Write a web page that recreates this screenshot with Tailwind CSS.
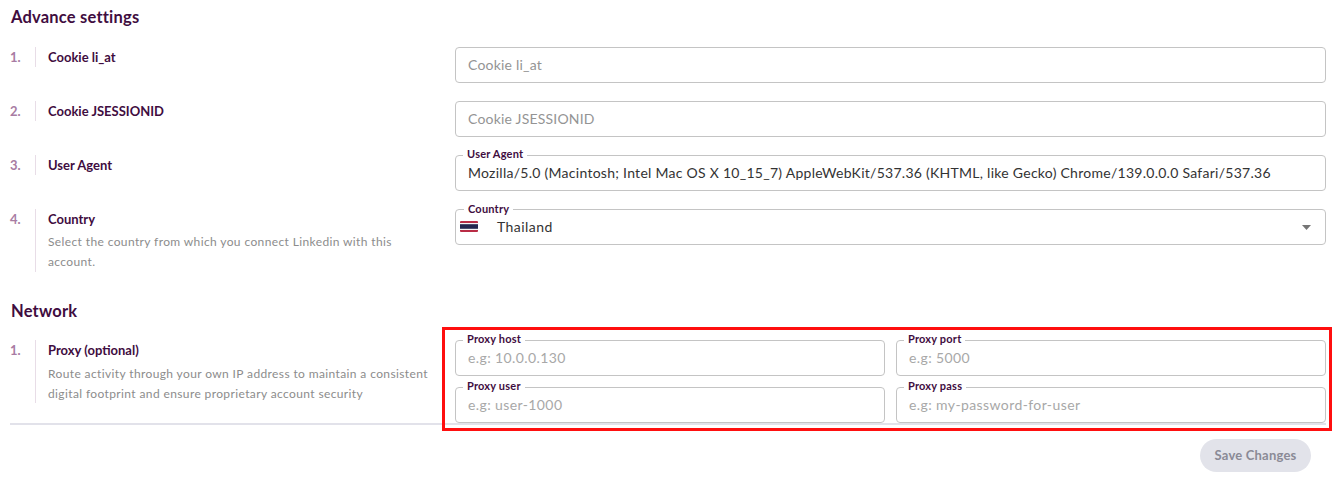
<!DOCTYPE html>
<html lang="en">
<head>
    <meta charset="UTF-8">
    <meta name="viewport" content="width=device-width, initial-scale=1.0">
    <title>Account settings</title>
    <script src="https://cdn.jsdelivr.net/npm/@tailwindcss/browser@4"></script>
</head>
<body class="bg-white font-['Lato','Noto_Sans',sans-serif] text-[#3f0d3f]">
<div class="relative w-[1336px] h-[485px] overflow-hidden pt-[5px] pl-[10px] pr-[10px]">

    <!-- Advance settings -->
    <h2 class="pl-px text-[16.5px] leading-6 font-bold tracking-[0.2px] mb-[18px]">Advance settings</h2>
    <div class="flex flex-col gap-[18px]">
        <div class="flex">
            <div class="w-[445px] flex">
                <span class="w-[26px] border-r border-[#e8dde7] h-5 text-[13px] leading-5 font-bold text-[#a87ca3]">1.</span>
                <span class="pl-3 text-[13px] leading-5 font-bold">Cookie li_at</span>
            </div>
            <input class="flex-1 h-9 px-3 pb-[2px] border border-[#c4c4c4] rounded text-[14px] tracking-[0.2px] text-[#333] placeholder:text-[#949494] outline-none" placeholder="Cookie li_at">
        </div>
        <div class="flex">
            <div class="w-[445px] flex">
                <span class="w-[26px] border-r border-[#e8dde7] h-5 text-[13px] leading-5 font-bold text-[#a87ca3]">2.</span>
                <span class="pl-3 text-[13px] leading-5 font-bold">Cookie JSESSIONID</span>
            </div>
            <input class="flex-1 h-9 px-3 pb-[2px] border border-[#c4c4c4] rounded text-[14px] tracking-[0.2px] text-[#333] placeholder:text-[#949494] outline-none" placeholder="Cookie JSESSIONID">
        </div>
        <div class="flex">
            <div class="w-[445px] flex">
                <span class="w-[26px] border-r border-[#e8dde7] h-5 text-[13px] leading-5 font-bold text-[#a87ca3]">3.</span>
                <span class="pl-3 text-[13px] leading-5 font-bold">User Agent</span>
            </div>
            <div class="relative flex-1">
                <label class="absolute -top-[8px] left-[8px] px-1 bg-white text-[11px] leading-[13px] font-bold tracking-[0.2px]">User Agent</label>
                <input class="w-full h-9 px-3 pb-[2px] border border-[#c4c4c4] rounded text-[14px] tracking-[0.27px] text-[#333] outline-none" value="Mozilla/5.0 (Macintosh; Intel Mac OS X 10_15_7) AppleWebKit/537.36 (KHTML, like Gecko) Chrome/139.0.0.0 Safari/537.36">
            </div>
        </div>
        <div class="flex">
            <div class="w-[445px] flex">
                <span class="w-[26px] border-r border-[#e8dde7] h-[63px] text-[13px] leading-5 font-bold text-[#a87ca3]">4.</span>
                <div class="pl-3 w-[397px]">
                    <p class="text-[13px] leading-5 font-bold">Country</p>
                    <p class="mt-[3px] text-[12px] leading-5 tracking-[0.38px] text-[#8c8c8c]">Select the country from which you connect Linkedin with this account.</p>
                </div>
            </div>
            <div class="relative flex-1 h-9 flex items-center border border-[#c4c4c4] rounded pl-1 pr-[14px]">
                <label class="absolute -top-[8px] left-[8px] px-1 bg-white text-[11px] leading-[13px] font-bold tracking-[0.2px]">Country</label>
                <svg class="w-[18px] h-[11px] mb-px" viewBox="0 0 18 11">
                    <rect width="18" height="11" rx="1" fill="#b92c45"/>
                    <rect y="2" width="18" height="7" fill="#f4f4f4"/>
                    <rect y="3.2" width="18" height="4.6" fill="#23264f"/>
                </svg>
                <span class="ml-[19px] pb-[2px] text-[14px] tracking-[0.45px] text-[#333]">Thailand</span>
                <svg class="ml-auto w-[9px] h-[5px]" viewBox="0 0 9 5"><polygon points="0,0 9,0 4.5,5" fill="#757575"/></svg>
            </div>
        </div>
    </div>

    <!-- Network -->
    <h2 class="mt-[27px] pl-px text-[16.5px] leading-6 font-bold tracking-[0.2px] mb-[17px]">Network</h2>
    <div class="flex border-b-2 border-[#e2e2ea]">
        <div class="w-[445px] flex">
            <span class="w-[26px] border-r border-[#e8dde7] h-[63px] text-[13px] leading-5 font-bold text-[#a87ca3]">1.</span>
            <div class="pl-3 w-[397px]">
                <p class="text-[13px] leading-5 font-bold">Proxy (optional)</p>
                <p class="mt-[4px] text-[12px] leading-5 tracking-[0.38px] text-[#8c8c8c]">Route activity through your own IP address to maintain a consistent digital footprint and ensure proprietary account security</p>
            </div>
        </div>
        <div class="flex-1 grid grid-cols-2 gap-x-[11px] gap-y-[11px]">
            <div class="relative">
                <label class="absolute -top-[8px] left-[8px] px-1 bg-white text-[11px] leading-[13px] font-bold tracking-[0.2px]">Proxy host</label>
                <input class="w-full h-9 px-3 pb-[2px] border border-[#c4c4c4] rounded text-[14px] tracking-[0.4px] placeholder:text-[#a8a8a8] outline-none" placeholder="e.g: 10.0.0.130">
            </div>
            <div class="relative">
                <label class="absolute -top-[8px] left-[8px] px-1 bg-white text-[11px] leading-[13px] font-bold tracking-[0.2px]">Proxy port</label>
                <input class="w-full h-9 px-3 pb-[2px] border border-[#c4c4c4] rounded text-[14px] tracking-[0.4px] placeholder:text-[#a8a8a8] outline-none" placeholder="e.g: 5000">
            </div>
            <div class="relative">
                <label class="absolute -top-[8px] left-[8px] px-1 bg-white text-[11px] leading-[13px] font-bold tracking-[0.2px]">Proxy user</label>
                <input class="w-full h-9 px-3 pb-[2px] border border-[#c4c4c4] rounded text-[14px] tracking-[0.4px] placeholder:text-[#a8a8a8] outline-none" placeholder="e.g: user-1000">
            </div>
            <div class="relative">
                <label class="absolute -top-[8px] left-[8px] px-1 bg-white text-[11px] leading-[13px] font-bold tracking-[0.2px]">Proxy pass</label>
                <input class="w-full h-9 px-3 pb-[2px] border border-[#c4c4c4] rounded text-[14px] tracking-[0.4px] placeholder:text-[#a8a8a8] outline-none" placeholder="e.g: my-password-for-user">
            </div>
        </div>
    </div>

    <div class="flex justify-end mt-[14px] pr-[15px]">
        <button class="w-[111px] h-[33px] rounded-full bg-[#e2e3ea] text-[#8a8a96] text-[13px] font-bold tracking-[0.2px]">Save Changes</button>
    </div>

    <!-- red highlight from the screenshot -->
    <div class="absolute left-[442px] top-[327px] w-[890px] h-[104px] border-[3px] border-[#ff0f0f]"></div>
</div>
</body>
</html>
